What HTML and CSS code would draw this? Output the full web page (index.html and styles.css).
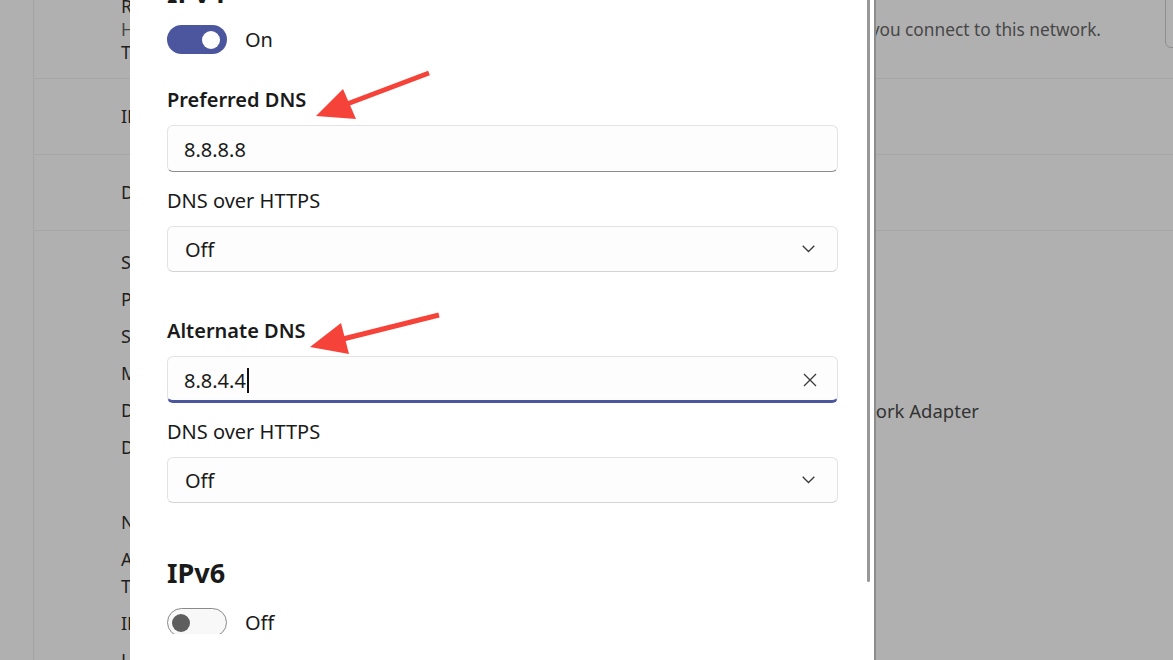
FILE: index.html
```html
<!DOCTYPE html>
<html lang="en">
<head>
<meta charset="utf-8">
<title>Edit DNS settings</title>
<link rel="stylesheet" href="styles.css">
</head>
<body>
<div class="page">
  <div class="rail"></div>
  <main class="main">
    <section class="card card-top">
      <div class="card-text">
        <div class="line">Random hardware addresses</div>
        <div class="line line-split secondary"><span>Help protect your privacy by making it harder to track</span><span>you connect to this network.</span></div>
        <div class="line">The setting applies to new connections</div>
      </div>
      <div class="ghost-btn"></div>
    </section>
    <section class="card card-row">IP assignment:</section>
    <section class="card card-row">DNS server assignment:</section>
    <section class="props">
      <div class="prop"><span class="prop-label">SSID:</span><span>Home</span></div>
      <div class="prop"><span class="prop-label">Protocol:</span><span>Wi-Fi 5</span></div>
      <div class="prop"><span class="prop-label">Security type:</span><span>WPA2</span></div>
      <div class="prop"><span class="prop-label">Manufacturer:</span><span>Intel</span></div>
      <div class="prop prop-desc"><span class="prop-label">Description:</span><span class="prop-value-wide">Intel(R) Wireless-AC 9560 Network Adapter</span></div>
      <div class="prop"><span class="prop-label">Driver version:</span><span>22.1</span></div>
      <div class="prop prop-group"><span class="prop-label">Network band:</span><span>5 GHz</span></div>
      <div class="prop"><span class="prop-label">Aggregated link speed (Receive/<br>Transmit):</span><span>866</span></div>
      <div class="prop"><span class="prop-label">IPv6 address:</span><span>fe80::</span></div>
      <div class="prop"><span class="prop-label">Link-local IPv6 address:</span><span>fe80::</span></div>
    </section>
  </main>
</div>

<div class="dialog">
  <div class="dialog-scroll">
    <h2 class="section-title section-title-first">IPv4</h2>
    <div class="toggle-row">
      <div class="toggle toggle-on"><span class="knob"></span></div>
      <span>On</span>
    </div>

    <div class="field-label field-label-strong gap-lg">Preferred DNS</div>
    <div class="textbox gap-sm"><span>8.8.8.8</span></div>
    <div class="field-label gap-md">DNS over HTTPS</div>
    <div class="select gap-sm">
      <span>Off</span>
      <svg class="chev" width="13" height="8" viewBox="0 0 13 8"><polyline points="0.7,0.7 6.5,6.5 12.3,0.7" fill="none" stroke="#3a3a3a" stroke-width="1.3"/></svg>
    </div>

    <div class="field-label field-label-strong gap-xl">Alternate DNS</div>
    <div class="textbox textbox-focus gap-sm">
      <span>8.8.4.4<span class="caret"></span></span>
      <svg width="14" height="14" viewBox="0 0 14 14"><path d="M1 1 L13 13 M13 1 L1 13" fill="none" stroke="#3a3a3a" stroke-width="1.3"/></svg>
    </div>
    <div class="field-label gap-md">DNS over HTTPS</div>
    <div class="select gap-sm">
      <span>Off</span>
      <svg class="chev" width="13" height="8" viewBox="0 0 13 8"><polyline points="0.7,0.7 6.5,6.5 12.3,0.7" fill="none" stroke="#3a3a3a" stroke-width="1.3"/></svg>
    </div>

    <h2 class="section-title gap-xxl">IPv6</h2>
    <div class="toggle-row gap-md">
      <div class="toggle toggle-off"><span class="knob"></span></div>
      <span>Off</span>
    </div>
  </div>
  <div class="thumb"></div>
</div>

<svg class="annotations" width="1173" height="660" viewBox="0 0 1173 660">
  <line x1="429" y1="73" x2="347" y2="104" stroke="#f5433a" stroke-width="5"/>
  <polygon points="316,116 343,89 356,119" fill="#f5433a"/>
  <line x1="439" y1="315" x2="343" y2="339" stroke="#f5433a" stroke-width="5"/>
  <polygon points="310,347 341,323 349,354" fill="#f5433a"/>
</svg>
</body>
</html>
```
FILE: styles.css
```css
* { box-sizing: border-box; }

html, body {
  margin: 0;
  height: 660px;
  overflow: hidden;
}

body {
  position: relative;
  background: #b0b0b0;
  font-family: "Noto Sans", "Open Sans", sans-serif;
  font-size: 20px;
  color: #1f1f1f;
}

/* ---------- background page (dimmed) ---------- */
.page {
  display: flex;
  height: 660px;
  font-size: 18px;
}

.rail {
  flex: none;
  width: 34px;
  border-right: 1px solid #a4a4a4;
}

.main {
  flex: 1;
  min-width: 0;
}

.card {
  border-bottom: 1px solid #a6a6a6;
  padding-left: 87px;
}

.card-top {
  display: flex;
  align-items: flex-start;
  height: 79px;
}

.card-text {
  flex: none;
  width: 980px;
  margin-top: -5px;
  line-height: 23px;
  white-space: nowrap;
}

.line-split {
  display: flex;
  justify-content: space-between;
}

.secondary {
  color: #474747;
  font-size: 17.3px;
}

.ghost-btn {
  flex: none;
  width: 60px;
  height: 58px;
  margin-top: -10px;
  margin-left: 64px;
  border: 1px solid #8e8e8e;
  border-radius: 6px;
}

.card-row {
  display: flex;
  align-items: center;
  height: 76px;
  padding-bottom: 2px;
}

.props {
  display: flex;
  flex-direction: column;
  gap: 10px;
  padding: 18px 0 0 87px;
  line-height: 27px;
}

.prop {
  display: flex;
}

.prop-label {
  width: 330px;
  flex: none;
}

.prop-desc {
  width: 858px;
  justify-content: space-between;
}

.prop-desc .prop-label { width: auto; }

.prop-value-wide { font-size: 18.5px; color: #333333; }

.prop-group { margin-top: 38px; }

/* ---------- dialog ---------- */
.dialog {
  position: absolute;
  top: 0;
  left: 130px;
  width: 746px;
  height: 660px;
  background: #ffffff;
  border-right: 2px solid #8c8c8c;
  color: #1a1a1a;
}

.dialog-scroll {
  height: 634px;
  overflow: hidden;
  padding: 0 36px 0 37px;
}

.thumb {
  position: absolute;
  top: -4px;
  right: 4px;
  width: 3px;
  height: 586px;
  border-radius: 2px;
  background: #989898;
}

.section-title {
  margin: 0;
  font-size: 27px;
  font-weight: 700;
  line-height: 40px;
}

.section-title-first { margin-top: -27px; margin-bottom: 12px; }

.toggle-row {
  display: flex;
  align-items: center;
  gap: 18px;
  height: 29px;
  line-height: 28px;
}

.toggle {
  flex: none;
  display: flex;
  align-items: center;
  width: 60px;
  height: 29px;
  border-radius: 15px;
}

.toggle-on {
  background: #4c569e;
  justify-content: flex-end;
  padding-right: 7px;
}

.toggle-on .knob { background: #ffffff; }

.toggle-off {
  background: #f8f8f8;
  border: 1.5px solid #8a8a8a;
  padding-left: 3.5px;
}

.toggle-off .knob { background: #5e5e5e; }

.knob {
  width: 18px;
  height: 18px;
  border-radius: 50%;
}

.field-label { line-height: 28px; }
.field-label-strong { font-weight: 600; }

.gap-sm { margin-top: 11px; }
.gap-md { margin-top: 15px; }
.gap-lg { margin-top: 32px; }
.gap-xl { margin-top: 45px; }
.gap-xxl { margin-top: 50px; }

.textbox,
.select {
  display: flex;
  align-items: center;
  justify-content: space-between;
  border: 1px solid #e3e3e3;
  border-radius: 6px;
  background: #fdfdfd;
}

.textbox {
  height: 47px;
  padding: 2px 20px 0 16px;
  border-bottom: 1px solid #8d8d8d;
}

.textbox-focus {
  border-bottom: 3px solid #4c569e;
  padding-top: 3px;
}

.caret {
  display: inline-block;
  width: 2px;
  height: 25px;
  margin-left: 1px;
  background: #111111;
  vertical-align: -5px;
}

.select {
  height: 46px;
  padding: 0 22px 0 17px;
  border-bottom-color: #d4d4d4;
}

.annotations {
  position: absolute;
  top: 0;
  left: 0;
  pointer-events: none;
}
```
